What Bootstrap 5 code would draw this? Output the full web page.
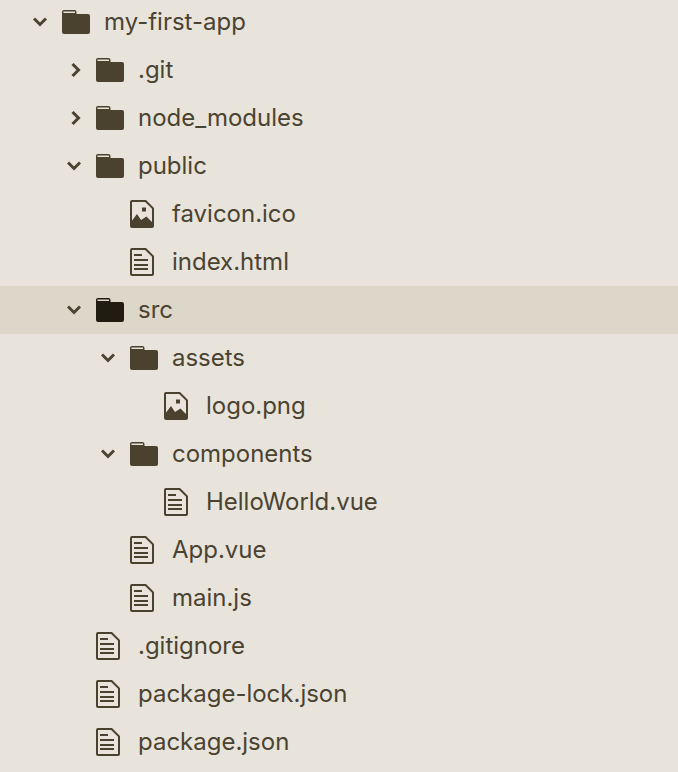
<!DOCTYPE html>
<html lang="en">
<head>
    <meta charset="UTF-8">
    <meta name="viewport" content="width=device-width, initial-scale=1.0">
    <title>my-first-app</title>
    <link rel="stylesheet" href="https://cdn.jsdelivr.net/npm/bootstrap@5.3.0/dist/css/bootstrap.min.css">
    <style>
        html, body { height: 100%; overflow: hidden; }
        body { background: #e8e4db; color: #4b4331; font-family: Inter, "Liberation Sans", sans-serif; font-size: 24px; letter-spacing: -.01px; }
        .file-tree { margin-top: -2px; }
        .tree-row { height: 48px; padding-left: 28px; }
        .tree-row.selected { background: #dcd7c8; }
        .tree-row.selected .tree-icon { color: #211c12; }
        .depth-1 { padding-left: 62px; }
        .depth-2 { padding-left: 96px; }
        .depth-3 { padding-left: 130px; }
        .caret-slot { width: 34px; flex: none; padding-left: 5px; }
        .icon-slot { width: 42px; flex: none; }
        .tree-icon { display: block; color: #4a412e; }
        .tree-name { line-height: 1; }
    </style>
</head>
<body>
    <svg width="0" height="0" class="d-block">
        <symbol id="folder" viewBox="0 0 28 24">
            <path fill="currentColor" fill-rule="evenodd" d="M2 0H12.5A2 2 0 0 1 14.5 2V4H26A2 2 0 0 1 28 6V22A2 2 0 0 1 26 24H2A2 2 0 0 1 0 22V2A2 2 0 0 1 2 0ZM1.5 1.5V3H13V1.5Z"/>
        </symbol>
        <symbol id="doc" viewBox="0 0 24 28">
            <path fill="none" stroke="currentColor" stroke-width="2" d="M2 1H15.6L23 8.4V26A1 1 0 0 1 22 27H2A1 1 0 0 1 1 26V2A1 1 0 0 1 2 1Z"/>
            <path fill="none" stroke="currentColor" stroke-width="2" d="M4 7H12M4 12H18M4 17H18M4 21H18"/>
        </symbol>
        <symbol id="pic" viewBox="0 0 24 28">
            <path fill="none" stroke="currentColor" stroke-width="2" d="M2 1H15.6L23 8.4V26A1 1 0 0 1 22 27H2A1 1 0 0 1 1 26V2A1 1 0 0 1 2 1Z"/>
            <path fill="currentColor" d="M12 7.500H16V11.500H12ZM1 27V22L7 14L11 20L16.500 16.500L23 23V27Z"/>
        </symbol>
        <symbol id="down" viewBox="0 0 14 10">
            <path fill="none" stroke="currentColor" stroke-width="3" d="M1 1.500L7 7.500L13 1.500"/>
        </symbol>
        <symbol id="right" viewBox="0 0 10 14">
            <path fill="none" stroke="currentColor" stroke-width="3" d="M1.500 1L7.500 7L1.500 13"/>
        </symbol>
    </svg>

    <ul class="file-tree list-unstyled mb-0" id="tree"></ul>

    <script>
        // depth, icon, name, caret
        const rows = [
            [0, 'folder', 'my-first-app', 'down'],
            [1, 'folder', '.git', 'right'],
            [1, 'folder', 'node_modules', 'right'],
            [1, 'folder', 'public', 'down'],
            [2, 'pic', 'favicon.ico'],
            [2, 'doc', 'index.html'],
            [1, 'folder', 'src', 'down', true],
            [2, 'folder', 'assets', 'down'],
            [3, 'pic', 'logo.png'],
            [2, 'folder', 'components', 'down'],
            [3, 'doc', 'HelloWorld.vue'],
            [2, 'doc', 'App.vue'],
            [2, 'doc', 'main.js'],
            [1, 'doc', '.gitignore'],
            [1, 'doc', 'package-lock.json'],
            [1, 'doc', 'package.json']
        ];

        const tree = document.getElementById('tree');
        rows.forEach(function (r) {
            const [depth, icon, name, caret, selected] = r;
            const li = document.createElement('li');
            li.className = 'tree-row d-flex align-items-center depth-' + depth + (selected ? ' selected' : '');
            const isFolder = icon === 'folder';
            const w = isFolder ? 28 : 24, h = isFolder ? 24 : 28;
            let caretHtml = '';
            if (caret === 'down') caretHtml = '<svg class="d-block" width="14" height="10"><use href="#down"/></svg>';
            if (caret === 'right') caretHtml = '<svg class="d-block ms-1" width="10" height="14"><use href="#right"/></svg>';
            li.innerHTML = '<span class="caret-slot">' + caretHtml + '</span>' +
                '<span class="icon-slot"><svg class="tree-icon" width="' + w + '" height="' + h + '"><use href="#' + icon + '"/></svg></span>' +
                '<span class="tree-name">' + name + '</span>';
            tree.appendChild(li);
        });
    </script>
    <script src="https://cdn.jsdelivr.net/npm/bootstrap@5.3.0/dist/js/bootstrap.bundle.min.js"></script>
</body>
</html>
